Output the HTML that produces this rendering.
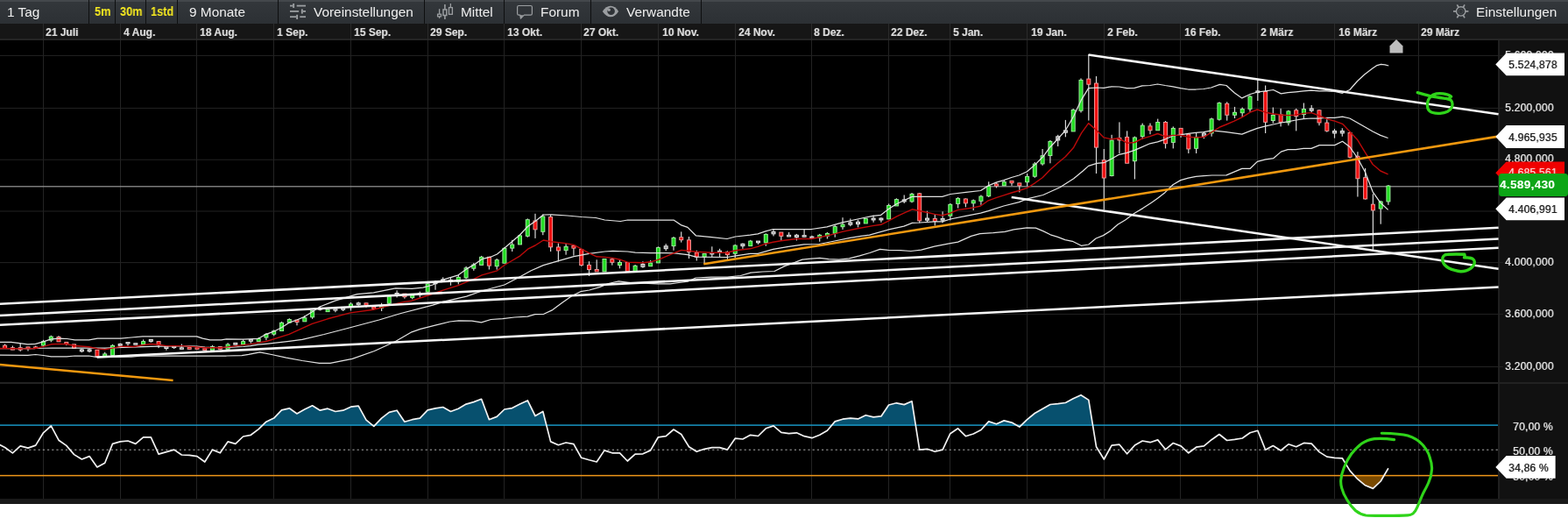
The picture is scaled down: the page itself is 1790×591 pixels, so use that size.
<!DOCTYPE html>
<html lang="de"><head><meta charset="utf-8"><title>Chart</title>
<style>
html,body{margin:0;padding:0;background:#fff;}
body{width:1790px;height:591px;overflow:hidden;position:relative;font-family:"Liberation Sans",Arial,sans-serif;}
#app{position:absolute;left:0;top:0;width:1790px;height:575px;background:#000;}
#tb{position:absolute;left:0;top:0;width:1790px;height:27px;background:linear-gradient(#33373b,#2c3034);border-top:2px solid #44484c;box-sizing:border-box;}
.sep{position:absolute;top:0;width:1px;height:27px;background:#0e0f10;}
.tl,.ty,.dl,.al,.tag{will-change:transform;}
.tl{position:absolute;top:1.5px;height:25px;line-height:24px;font-size:15.4px;color:#eeeeee;white-space:nowrap;}
.ty{position:absolute;top:1px;height:25px;line-height:24px;font-size:14.2px;font-weight:bold;color:#f7ea20;white-space:nowrap;transform:scaleX(0.9);transform-origin:0 50%;}
#dates{position:absolute;left:0;top:27px;width:1790px;height:19px;background:#161616;border-bottom:2px solid #252525;box-sizing:border-box;}
.dl{position:absolute;top:0;height:19px;line-height:20px;font-size:12px;font-weight:bold;color:#dcdcdc;white-space:nowrap;text-shadow:0.8px 0 0.6px rgba(220,220,220,0.4);}
.dg{position:absolute;top:0;width:1px;height:19px;background:#2b2b2b;}
#axis{position:absolute;left:1709.5px;top:46px;width:80.5px;height:529px;background:#111;border-left:2px solid #1f1f1f;box-sizing:border-box;}
#foot{position:absolute;left:0;top:569px;width:1790px;height:6px;background:#191919;}
.al{position:absolute;font-size:12px;color:#e6e6e6;white-space:nowrap;height:15px;line-height:15px;letter-spacing:0.24px;text-shadow:0.8px 0 0.4px rgba(230,230,230,0.65);margin-top:0.7px;}
.tag{position:absolute;font-size:12px;color:#1c1c1c;white-space:nowrap;height:25px;line-height:25px;letter-spacing:0.24px;text-shadow:0.8px 0 0.4px rgba(28,28,28,0.6);margin-top:2px;}
svg{position:absolute;left:0;top:0;overflow:visible;}
</style></head><body>
<div id="app">
<div id="tb">
<div class="sep" style="left:101px;top:-2px"></div>
<div class="sep" style="left:131px;top:-2px"></div>
<div class="sep" style="left:166px;top:-2px"></div>
<div class="sep" style="left:202px;top:-2px"></div>
<div class="sep" style="left:317px;top:-2px"></div>
<div class="sep" style="left:484px;top:-2px"></div>
<div class="sep" style="left:575px;top:-2px"></div>
<div class="sep" style="left:674px;top:-2px"></div>
<div class="sep" style="left:800px;top:-2px"></div>
</div>
<div class="tl" style="left:8px">1 Tag</div>
<div class="ty" style="left:107.6px">5m</div>
<div class="ty" style="left:136.6px">30m</div>
<div class="ty" style="left:171.6px">1std</div>
<div class="tl" style="left:216px">9 Monate</div>
<div class="tl" style="left:358px">Voreinstellungen</div>
<div class="tl" style="left:526px">Mittel</div>
<div class="tl" style="left:617px">Forum</div>
<div class="tl" style="left:715px">Verwandte</div>
<div class="tl" style="left:1685px">Einstellungen</div>
<div id="dates">
<div class="dg" style="left:49px"></div><div class="dl" style="left:52.0px">21 Juli</div>
<div class="dg" style="left:137px"></div><div class="dl" style="left:141.0px">4 Aug.</div>
<div class="dg" style="left:224px"></div><div class="dl" style="left:228.3px">18 Aug.</div>
<div class="dg" style="left:312px"></div><div class="dl" style="left:316.3px">1 Sep.</div>
<div class="dg" style="left:400px"></div><div class="dl" style="left:404.3px">15 Sep.</div>
<div class="dg" style="left:488px"></div><div class="dl" style="left:491.0px">29 Sep.</div>
<div class="dg" style="left:575px"></div><div class="dl" style="left:579.1px">13 Okt.</div>
<div class="dg" style="left:663px"></div><div class="dl" style="left:666.0px">27 Okt.</div>
<div class="dg" style="left:751px"></div><div class="dl" style="left:756.3px">10 Nov.</div>
<div class="dg" style="left:839px"></div><div class="dl" style="left:842.6px">24 Nov.</div>
<div class="dg" style="left:926px"></div><div class="dl" style="left:929.0px">8 Dez.</div>
<div class="dg" style="left:1014px"></div><div class="dl" style="left:1017.0px">22 Dez.</div>
<div class="dg" style="left:1084px"></div><div class="dl" style="left:1087.6px">5 Jan.</div>
<div class="dg" style="left:1172px"></div><div class="dl" style="left:1177.3px">19 Jan.</div>
<div class="dg" style="left:1260px"></div><div class="dl" style="left:1264.0px">2 Feb.</div>
<div class="dg" style="left:1347px"></div><div class="dl" style="left:1352.3px">16 Feb.</div>
<div class="dg" style="left:1435px"></div><div class="dl" style="left:1439.0px">2 März</div>
<div class="dg" style="left:1523px"></div><div class="dl" style="left:1528.3px">16 März</div>
<div class="dg" style="left:1619px"></div><div class="dl" style="left:1622.0px">29 März</div>
</div>
<div id="axis"></div>
<div id="foot"></div>
</div>
<svg id="chart" width="1790" height="591" viewBox="0 0 1790 591">
<g id="grid"><rect x="49" y="46" width="1" height="523" fill="#232323"/><rect x="137" y="46" width="1" height="523" fill="#232323"/><rect x="224" y="46" width="1" height="523" fill="#232323"/><rect x="312" y="46" width="1" height="523" fill="#232323"/><rect x="400" y="46" width="1" height="523" fill="#232323"/><rect x="488" y="46" width="1" height="523" fill="#232323"/><rect x="575" y="46" width="1" height="523" fill="#232323"/><rect x="663" y="46" width="1" height="523" fill="#232323"/><rect x="751" y="46" width="1" height="523" fill="#232323"/><rect x="839" y="46" width="1" height="523" fill="#232323"/><rect x="926" y="46" width="1" height="523" fill="#232323"/><rect x="1014" y="46" width="1" height="523" fill="#232323"/><rect x="1084" y="46" width="1" height="523" fill="#232323"/><rect x="1172" y="46" width="1" height="523" fill="#232323"/><rect x="1260" y="46" width="1" height="523" fill="#232323"/><rect x="1347" y="46" width="1" height="523" fill="#232323"/><rect x="1435" y="46" width="1" height="523" fill="#232323"/><rect x="1523" y="46" width="1" height="523" fill="#232323"/><rect x="1619" y="46" width="1" height="523" fill="#232323"/><rect x="0" y="62.9" width="1716" height="1" fill="#232323"/><rect x="0" y="122.9" width="1716" height="1" fill="#232323"/><rect x="0" y="181.7" width="1716" height="1" fill="#232323"/><rect x="0" y="240.5" width="1716" height="1" fill="#232323"/><rect x="0" y="299.1" width="1716" height="1" fill="#232323"/><rect x="0" y="357.9" width="1716" height="1" fill="#232323"/><rect x="0" y="418.0" width="1716" height="1" fill="#232323"/><rect x="0" y="436" width="1790" height="2" fill="#222"/></g>
<rect x="0" y="212.2" width="1710" height="1.2" fill="#9a9a9a"/>
<g id="rsi"><polygon fill="#07506e" points="299.9,485.1 303.9,481.2 312.7,477.1 321.5,467.8 330.3,465.8 339,472 347.8,467 356.6,462.8 365.4,468.2 374.1,466.2 382.9,469.5 391.7,468.2 400.5,464.2 409.2,463.1 418,479.2 425.3,485.1"/><polygon fill="#07506e" points="427.9,485.1 435.6,477.1 444.3,470.4 453.1,468.2 461.9,481.2 470.7,478.7 479.4,477.1 488.2,467.8 497,465.8 505.7,464.5 514.5,469.5 523.3,466.2 532.1,461.1 540.8,458.6 549.6,455.3 558.4,478.7 567.2,475.4 575.9,467 584.7,465.6 593.5,461.1 602.3,456.9 611,474.5 619.8,469.5 623.8,485.1"/><polygon fill="#07506e" points="949.7,485.1 953.2,480.9 962,478.2 970.8,477.1 979.5,477.9 988.3,473.7 997.1,475.9 1005.9,474.9 1014.6,462 1023.4,459.8 1032.2,461.6 1041,457.8 1045.3,485.1"/><polygon fill="#07506e" points="1124.9,485.1 1128.7,480.9 1137.5,483.8 1146.2,479.9 1155,482.1 1160.3,485.1"/><polygon fill="#07506e" points="1165.9,485.1 1172.6,478.7 1181.3,471.5 1190.1,466.5 1198.9,461.5 1207.7,460.6 1216.4,459.5 1225.2,454.8 1234,450.7 1242.8,456.4 1247.5,485.1"/><polygon fill="#7a4a00" points="1546.1,542.6 1549.9,546.7 1558.6,553.8 1567.4,557.4 1576.2,549 1580,542.6"/><rect x="0" y="484.40000000000003" width="1710" height="1.4" fill="#1a9fd0"/><line x1="2" y1="513.2" x2="1711" y2="513.2" stroke="#b0b0b0" stroke-width="1" stroke-dasharray="2.2,3"/><rect x="0" y="541.85" width="1710" height="1.5" fill="#ee961a"/><polyline fill="none" stroke="#f2f2f2" stroke-width="1.7" stroke-linejoin="round" points="-3.1,506 5.6,510.5 14.4,516.9 23.2,508.9 32,511.1 40.7,508.1 49.5,493.8 58.3,485.9 67,502.2 75.8,508.4 84.6,518.6 93.4,524 102.1,520.6 110.9,532.9 119.7,528.2 128.5,506.4 137.2,503.9 146,503 154.8,506.4 163.6,498.8 172.3,498.8 181.1,518.1 189.9,515.6 198.7,513.1 207.4,519 216.2,519.3 225,520.6 233.8,527 242.5,513.1 251.3,516.8 260.1,503.9 268.8,506.4 277.6,498 286.4,496.3 295.2,489.6 303.9,481.2 312.7,477.1 321.5,467.8 330.3,465.8 339,472 347.8,467 356.6,462.8 365.4,468.2 374.1,466.2 382.9,469.5 391.7,468.2 400.5,464.2 409.2,463.1 418,479.2 426.8,486.3 435.6,477.1 444.3,470.4 453.1,468.2 461.9,481.2 470.7,478.7 479.4,477.1 488.2,467.8 497,465.8 505.7,464.5 514.5,469.5 523.3,466.2 532.1,461.1 540.8,458.6 549.6,455.3 558.4,478.7 567.2,475.4 575.9,467 584.7,465.6 593.5,461.1 602.3,456.9 611,474.5 619.8,469.5 628.6,503.9 637.4,507.7 646.1,505 654.9,506.7 663.7,522.3 672.5,524.8 681.2,527 690,513.9 698.8,516.8 707.5,516.9 716.3,526 725.1,518.1 733.9,517.8 742.6,513.9 751.4,498.8 760.2,497.7 769,490 777.7,495.5 786.5,509.7 795.3,515.3 804.1,512.3 812.8,510.6 821.6,510.6 830.4,513.1 839.2,500.2 847.9,501 856.7,496.3 865.5,497.5 874.3,488.8 883,485.9 891.8,493.3 900.6,494.7 909.4,493.8 918.1,497.7 926.9,499.7 935.7,496.3 944.4,491.3 953.2,480.9 962,478.2 970.8,477.1 979.5,477.9 988.3,473.7 997.1,475.9 1005.9,474.9 1014.6,462 1023.4,459.8 1032.2,461.6 1041,457.8 1049.7,513.1 1058.5,512.3 1067.3,515.3 1076.1,513.1 1084.8,494.7 1093.6,488.8 1102.4,497.7 1111.2,495 1119.9,490.5 1128.7,480.9 1137.5,483.8 1146.2,479.9 1155,482.1 1163.8,487.1 1172.6,478.7 1181.3,471.5 1190.1,466.5 1198.9,461.5 1207.7,460.6 1216.4,459.5 1225.2,454.8 1234,450.7 1242.8,456.4 1251.5,509.7 1260.3,524 1269.1,508.1 1277.9,507.2 1286.6,517.8 1295.4,508.1 1304.2,503 1313,504.7 1321.7,501.9 1330.5,512.8 1339.3,505.5 1348.1,508.9 1356.8,516.8 1365.6,510.2 1374.4,508.9 1383.1,501.7 1391.9,495.5 1400.7,502.5 1409.5,501.4 1418.2,500 1427,493.8 1435.8,491.3 1444.6,513.2 1453.3,508.5 1462.1,514 1470.9,506.8 1479.7,509.7 1488.4,505.4 1497.2,506.1 1506,515.6 1514.8,521.1 1523.5,522.3 1532.3,522.8 1541.1,537.1 1549.9,546.7 1558.6,553.8 1567.4,557.4 1576.2,549 1584.9,534.2"/></g>
<g id="candles"><rect x="5" y="392.4" width="1.2" height="5.1" fill="#d8d8d8"/><rect x="3.1" y="393.7" width="5" height="4.2" fill="#f0a0a0"/><rect x="4" y="394.6" width="3.2" height="2.4" fill="#f01212"/><rect x="13.8" y="394.5" width="1.2" height="4.7" fill="#d8d8d8"/><rect x="11.9" y="396.2" width="5" height="3.4" fill="#f0a0a0"/><rect x="12.8" y="397.1" width="3.2" height="1.6" fill="#f01212"/><rect x="22.6" y="391.6" width="1.2" height="9.3" fill="#d8d8d8"/><rect x="20.7" y="396.2" width="5" height="3.4" fill="#f0a0a0"/><rect x="21.6" y="397.1" width="3.2" height="1.6" fill="#f01212"/><rect x="31.4" y="395.8" width="1.2" height="4.7" fill="#d8d8d8"/><rect x="29.5" y="395.4" width="5" height="2.9" fill="#f0a0a0"/><rect x="30.4" y="396.3" width="3.2" height="1.1" fill="#f01212"/><rect x="40.1" y="394.5" width="1.2" height="3" fill="#d8d8d8"/><rect x="38.2" y="395.4" width="5" height="2.5" fill="#f0a0a0"/><rect x="39.1" y="396" width="3.2" height="1.3" fill="#f01212" opacity="0.85"/><rect x="48.9" y="387.8" width="1.2" height="7.6" fill="#d8d8d8"/><rect x="47" y="389.1" width="5" height="5.4" fill="#a4eea4"/><rect x="47.9" y="390" width="3.2" height="3.6" fill="#22dc22"/><rect x="57.7" y="382.7" width="1.2" height="7.6" fill="#d8d8d8"/><rect x="55.8" y="383.6" width="5" height="5" fill="#a4eea4"/><rect x="56.7" y="384.5" width="3.2" height="3.2" fill="#22dc22"/><rect x="66.4" y="383.1" width="1.2" height="6.8" fill="#d8d8d8"/><rect x="64.5" y="384" width="5" height="6.3" fill="#f0a0a0"/><rect x="65.4" y="384.9" width="3.2" height="4.5" fill="#f01212"/><rect x="75.2" y="390.3" width="1.2" height="3.8" fill="#d8d8d8"/><rect x="73.3" y="389.9" width="5" height="2.9" fill="#f0a0a0"/><rect x="74.2" y="390.8" width="3.2" height="1.1" fill="#f01212"/><rect x="84" y="392.8" width="1.2" height="4.7" fill="#d8d8d8"/><rect x="82.1" y="392.4" width="5" height="5.5" fill="#f0a0a0"/><rect x="83" y="393.3" width="3.2" height="3.7" fill="#f01212"/><rect x="92.8" y="397.9" width="1.2" height="4.2" fill="#d8d8d8"/><rect x="90.9" y="398.4" width="5" height="2.9" fill="#ededed"/><rect x="91.8" y="399.3" width="3.2" height="1.1" fill="#9a9a9a"/><rect x="101.5" y="397.9" width="1.2" height="4.2" fill="#d8d8d8"/><rect x="99.6" y="398.4" width="5" height="2.9" fill="#ededed"/><rect x="100.5" y="399.3" width="3.2" height="1.1" fill="#9a9a9a"/><rect x="110.3" y="399.2" width="1.2" height="7.8" fill="#d8d8d8"/><rect x="108.4" y="398.8" width="5" height="8.2" fill="#f0a0a0"/><rect x="109.3" y="399.7" width="3.2" height="6.4" fill="#f01212"/><rect x="119.1" y="401.7" width="1.2" height="4.7" fill="#d8d8d8"/><rect x="117.2" y="403.4" width="5" height="3.4" fill="#a4eea4"/><rect x="118.1" y="404.3" width="3.2" height="1.6" fill="#22dc22"/><rect x="127.9" y="392.8" width="1.2" height="13.5" fill="#d8d8d8"/><rect x="126" y="393.8" width="5" height="12.1" fill="#a4eea4"/><rect x="126.9" y="394.7" width="3.2" height="10.3" fill="#22dc22"/><rect x="136.6" y="391.6" width="1.2" height="3.8" fill="#d8d8d8"/><rect x="134.7" y="392" width="5" height="2.9" fill="#ededed"/><rect x="135.6" y="392.9" width="3.2" height="1.1" fill="#9a9a9a"/><rect x="145.4" y="390.4" width="1.2" height="4.2" fill="#d8d8d8"/><rect x="143.5" y="390" width="5" height="2.5" fill="#ededed"/><rect x="144.4" y="390.6" width="3.2" height="1.3" fill="#9a9a9a" opacity="0.85"/><rect x="154.2" y="391.6" width="1.2" height="1.7" fill="#d8d8d8"/><rect x="152.3" y="391.2" width="5" height="2.5" fill="#ededed"/><rect x="153.2" y="391.8" width="3.2" height="1.3" fill="#9a9a9a" opacity="0.85"/><rect x="163" y="387.4" width="1.2" height="5.5" fill="#d8d8d8"/><rect x="161.1" y="389.1" width="5" height="4.2" fill="#a4eea4"/><rect x="162" y="390" width="3.2" height="2.4" fill="#22dc22"/><rect x="171.7" y="387.4" width="1.2" height="3.4" fill="#d8d8d8"/><rect x="169.8" y="387" width="5" height="2.9" fill="#ededed"/><rect x="170.7" y="387.9" width="3.2" height="1.1" fill="#9a9a9a"/><rect x="180.5" y="389.5" width="1.2" height="7.6" fill="#d8d8d8"/><rect x="178.6" y="389.1" width="5" height="5.1" fill="#f0a0a0"/><rect x="179.5" y="390" width="3.2" height="3.3" fill="#f01212"/><rect x="189.3" y="395.5" width="1.2" height="4.2" fill="#d8d8d8"/><rect x="187.4" y="395.1" width="5" height="2.9" fill="#ededed"/><rect x="188.3" y="396" width="3.2" height="1.1" fill="#9a9a9a"/><rect x="198.1" y="395" width="1.2" height="3" fill="#d8d8d8"/><rect x="196.2" y="394.6" width="5" height="2.5" fill="#ededed"/><rect x="197.1" y="395.2" width="3.2" height="1.3" fill="#9a9a9a" opacity="0.85"/><rect x="206.8" y="392.5" width="1.2" height="5.9" fill="#d8d8d8"/><rect x="204.9" y="396.3" width="5" height="2.5" fill="#ededed"/><rect x="205.8" y="396.9" width="3.2" height="1.3" fill="#9a9a9a" opacity="0.85"/><rect x="215.6" y="396.3" width="1.2" height="2.1" fill="#d8d8d8"/><rect x="213.7" y="395.9" width="5" height="2.9" fill="#f0a0a0"/><rect x="214.6" y="396.8" width="3.2" height="1.1" fill="#f01212"/><rect x="224.4" y="396.7" width="1.2" height="1.7" fill="#d8d8d8"/><rect x="222.5" y="396.3" width="5" height="2.5" fill="#f0a0a0"/><rect x="223.4" y="396.9" width="3.2" height="1.3" fill="#f01212" opacity="0.85"/><rect x="233.2" y="397.6" width="1.2" height="2.1" fill="#d8d8d8"/><rect x="231.3" y="397.2" width="5" height="2.9" fill="#f0a0a0"/><rect x="232.2" y="398.1" width="3.2" height="1.1" fill="#f01212"/><rect x="241.9" y="393.8" width="1.2" height="5.9" fill="#d8d8d8"/><rect x="240" y="395.1" width="5" height="5" fill="#a4eea4"/><rect x="240.9" y="396" width="3.2" height="3.2" fill="#22dc22"/><rect x="250.7" y="395.5" width="1.2" height="2.9" fill="#d8d8d8"/><rect x="248.8" y="395.1" width="5" height="3.7" fill="#f0a0a0"/><rect x="249.7" y="396" width="3.2" height="1.9" fill="#f01212"/><rect x="259.5" y="391.2" width="1.2" height="7.2" fill="#d8d8d8"/><rect x="257.6" y="392.5" width="5" height="6.3" fill="#a4eea4"/><rect x="258.5" y="393.4" width="3.2" height="4.5" fill="#22dc22"/><rect x="268.2" y="391.2" width="1.2" height="2.1" fill="#d8d8d8"/><rect x="266.3" y="390.8" width="5" height="2.9" fill="#ededed"/><rect x="267.2" y="391.7" width="3.2" height="1.1" fill="#9a9a9a"/><rect x="277" y="387.4" width="1.2" height="5.6" fill="#d8d8d8"/><rect x="275.1" y="389.1" width="5" height="4.3" fill="#a4eea4"/><rect x="276" y="390" width="3.2" height="2.5" fill="#22dc22"/><rect x="285.8" y="387.4" width="1.2" height="4.2" fill="#d8d8d8"/><rect x="283.9" y="387.1" width="5" height="2.6" fill="#ededed"/><rect x="284.8" y="387.7" width="3.2" height="1.4" fill="#9a9a9a" opacity="0.85"/><rect x="294.6" y="385" width="1.2" height="4.5" fill="#d8d8d8"/><rect x="292.7" y="385.9" width="5" height="4" fill="#a4eea4"/><rect x="293.6" y="386.8" width="3.2" height="2.2" fill="#22dc22"/><rect x="303.3" y="380" width="1.2" height="8.2" fill="#d8d8d8"/><rect x="301.4" y="380.9" width="5" height="4.6" fill="#a4eea4"/><rect x="302.3" y="381.8" width="3.2" height="2.8" fill="#22dc22"/><rect x="312.1" y="376.3" width="1.2" height="6.9" fill="#d8d8d8"/><rect x="310.2" y="377.2" width="5" height="4.5" fill="#a4eea4"/><rect x="311.1" y="378.1" width="3.2" height="2.7" fill="#22dc22"/><rect x="320.9" y="366.9" width="1.2" height="10.7" fill="#d8d8d8"/><rect x="319" y="367.8" width="5" height="10.2" fill="#a4eea4"/><rect x="319.9" y="368.7" width="3.2" height="8.4" fill="#22dc22"/><rect x="329.7" y="363.2" width="1.2" height="5" fill="#d8d8d8"/><rect x="327.8" y="364" width="5" height="4.6" fill="#a4eea4"/><rect x="328.7" y="364.9" width="3.2" height="2.8" fill="#22dc22"/><rect x="338.4" y="365" width="1.2" height="6.3" fill="#d8d8d8"/><rect x="336.5" y="364.6" width="5" height="3.4" fill="#f0a0a0"/><rect x="337.4" y="365.5" width="3.2" height="1.6" fill="#f01212"/><rect x="347.2" y="360" width="1.2" height="6.9" fill="#d8d8d8"/><rect x="345.3" y="362.2" width="5" height="5.1" fill="#a4eea4"/><rect x="346.2" y="363.1" width="3.2" height="3.3" fill="#22dc22"/><rect x="356" y="353.8" width="1.2" height="10" fill="#d8d8d8"/><rect x="354.1" y="354" width="5" height="8.3" fill="#a4eea4"/><rect x="355" y="354.9" width="3.2" height="6.5" fill="#22dc22"/><rect x="364.8" y="349.4" width="1.2" height="5" fill="#d8d8d8"/><rect x="362.9" y="350.9" width="5" height="2.7" fill="#ededed"/><rect x="363.8" y="351.8" width="3.2" height="0.9" fill="#9a9a9a"/><rect x="373.5" y="353.2" width="1.2" height="2.5" fill="#d8d8d8"/><rect x="371.6" y="352.8" width="5" height="3.3" fill="#a4eea4"/><rect x="372.5" y="353.7" width="3.2" height="1.5" fill="#22dc22"/><rect x="382.3" y="352.8" width="1.2" height="3.5" fill="#d8d8d8"/><rect x="380.4" y="352.3" width="5" height="2.2" fill="#ededed"/><rect x="381.3" y="352.9" width="3.2" height="1" fill="#9a9a9a" opacity="0.85"/><rect x="391.1" y="352" width="1.2" height="3" fill="#d8d8d8"/><rect x="389.2" y="351.5" width="5" height="2.2" fill="#ededed"/><rect x="390.1" y="352.1" width="3.2" height="1" fill="#9a9a9a" opacity="0.85"/><rect x="399.9" y="345" width="1.2" height="9.4" fill="#d8d8d8"/><rect x="398" y="346.5" width="5" height="3.9" fill="#a4eea4"/><rect x="398.9" y="347.4" width="3.2" height="2.1" fill="#22dc22"/><rect x="408.6" y="344.4" width="1.2" height="4.4" fill="#d8d8d8"/><rect x="406.7" y="345.3" width="5" height="2.6" fill="#ededed"/><rect x="407.6" y="345.9" width="3.2" height="1.4" fill="#9a9a9a" opacity="0.85"/><rect x="417.4" y="345.7" width="1.2" height="5" fill="#d8d8d8"/><rect x="415.5" y="345.3" width="5" height="3.3" fill="#f0a0a0"/><rect x="416.4" y="346.2" width="3.2" height="1.5" fill="#f01212"/><rect x="426.2" y="350" width="1.2" height="2.5" fill="#d8d8d8"/><rect x="424.3" y="349.6" width="5" height="3.3" fill="#f0a0a0"/><rect x="425.2" y="350.5" width="3.2" height="1.5" fill="#f01212"/><rect x="435" y="345.7" width="1.2" height="9.3" fill="#d8d8d8"/><rect x="433.1" y="349" width="5" height="2.7" fill="#a4eea4"/><rect x="434" y="349.9" width="3.2" height="0.9" fill="#22dc22"/><rect x="443.7" y="337.5" width="1.2" height="10" fill="#d8d8d8"/><rect x="441.8" y="337.7" width="5" height="9" fill="#a4eea4"/><rect x="442.7" y="338.6" width="3.2" height="7.2" fill="#22dc22"/><rect x="452.5" y="331.3" width="1.2" height="8.1" fill="#d8d8d8"/><rect x="450.6" y="334" width="5" height="3.9" fill="#ededed"/><rect x="451.5" y="334.9" width="3.2" height="2.1" fill="#9a9a9a"/><rect x="461.3" y="335" width="1.2" height="5.7" fill="#d8d8d8"/><rect x="459.4" y="334.6" width="5" height="4.6" fill="#f0a0a0"/><rect x="460.3" y="335.5" width="3.2" height="2.8" fill="#f01212"/><rect x="470.1" y="336.9" width="1.2" height="4.4" fill="#d8d8d8"/><rect x="468.2" y="336.5" width="5" height="3.6" fill="#a4eea4"/><rect x="469.1" y="337.4" width="3.2" height="1.8" fill="#22dc22"/><rect x="478.8" y="332.6" width="1.2" height="6.9" fill="#d8d8d8"/><rect x="476.9" y="334.1" width="5" height="2.6" fill="#ededed"/><rect x="477.8" y="334.7" width="3.2" height="1.4" fill="#9a9a9a" opacity="0.85"/><rect x="487.6" y="322.6" width="1.2" height="11.2" fill="#d8d8d8"/><rect x="485.7" y="323.4" width="5" height="10.2" fill="#a4eea4"/><rect x="486.6" y="324.3" width="3.2" height="8.4" fill="#22dc22"/><rect x="496.4" y="320" width="1.2" height="10.7" fill="#d8d8d8"/><rect x="494.5" y="321.5" width="5" height="2.7" fill="#ededed"/><rect x="495.4" y="322.4" width="3.2" height="0.9" fill="#9a9a9a"/><rect x="505.1" y="316.3" width="1.2" height="5" fill="#d8d8d8"/><rect x="503.2" y="318.4" width="5" height="2.7" fill="#ededed"/><rect x="504.1" y="319.3" width="3.2" height="0.9" fill="#9a9a9a"/><rect x="513.9" y="316.3" width="1.2" height="9.4" fill="#d8d8d8"/><rect x="512" y="319" width="5" height="2.7" fill="#ededed"/><rect x="512.9" y="319.9" width="3.2" height="0.9" fill="#9a9a9a"/><rect x="522.7" y="313.8" width="1.2" height="10.6" fill="#d8d8d8"/><rect x="520.8" y="315.9" width="5" height="5.8" fill="#a4eea4"/><rect x="521.7" y="316.8" width="3.2" height="4" fill="#22dc22"/><rect x="531.5" y="303.8" width="1.2" height="14.4" fill="#d8d8d8"/><rect x="529.6" y="305.3" width="5" height="12" fill="#a4eea4"/><rect x="530.5" y="306.2" width="3.2" height="10.2" fill="#22dc22"/><rect x="540.2" y="300" width="1.2" height="8.8" fill="#d8d8d8"/><rect x="538.3" y="301.5" width="5" height="5.2" fill="#a4eea4"/><rect x="539.2" y="302.4" width="3.2" height="3.4" fill="#22dc22"/><rect x="549" y="291.9" width="1.2" height="10.6" fill="#d8d8d8"/><rect x="547.1" y="292.8" width="5" height="10.1" fill="#a4eea4"/><rect x="548" y="293.7" width="3.2" height="8.3" fill="#22dc22"/><rect x="557.8" y="293.2" width="1.2" height="14.3" fill="#d8d8d8"/><rect x="555.9" y="292.8" width="5" height="10.8" fill="#f0a0a0"/><rect x="556.8" y="293.7" width="3.2" height="9" fill="#f01212"/><rect x="566.6" y="295" width="1.2" height="12.6" fill="#d8d8d8"/><rect x="564.7" y="296.2" width="5" height="8" fill="#a4eea4"/><rect x="565.6" y="297.1" width="3.2" height="6.2" fill="#22dc22"/><rect x="575.3" y="282" width="1.2" height="18.3" fill="#d8d8d8"/><rect x="573.4" y="282.8" width="5" height="17.9" fill="#a4eea4"/><rect x="574.3" y="283.7" width="3.2" height="16.1" fill="#22dc22"/><rect x="584.1" y="273.8" width="1.2" height="13.2" fill="#d8d8d8"/><rect x="582.2" y="278.6" width="5" height="5" fill="#a4eea4"/><rect x="583.1" y="279.5" width="3.2" height="3.2" fill="#22dc22"/><rect x="592.9" y="267.5" width="1.2" height="11.5" fill="#d8d8d8"/><rect x="591" y="268.4" width="5" height="11" fill="#a4eea4"/><rect x="591.9" y="269.3" width="3.2" height="9.2" fill="#22dc22"/><rect x="601.7" y="249.4" width="1.2" height="21.3" fill="#d8d8d8"/><rect x="599.8" y="250.2" width="5" height="19.6" fill="#a4eea4"/><rect x="600.7" y="251.1" width="3.2" height="17.8" fill="#22dc22"/><rect x="610.4" y="243.8" width="1.2" height="28.1" fill="#d8d8d8"/><rect x="608.5" y="251.5" width="5" height="10.8" fill="#f0a0a0"/><rect x="609.4" y="252.4" width="3.2" height="9" fill="#f01212"/><rect x="619.2" y="244.4" width="1.2" height="23.8" fill="#d8d8d8"/><rect x="617.3" y="246.5" width="5" height="18.3" fill="#a4eea4"/><rect x="618.2" y="247.4" width="3.2" height="16.5" fill="#22dc22"/><rect x="628" y="245" width="1.2" height="42" fill="#d8d8d8"/><rect x="626.1" y="247.1" width="5" height="35.2" fill="#f0a0a0"/><rect x="627" y="248" width="3.2" height="33.4" fill="#f01212"/><rect x="636.8" y="277.5" width="1.2" height="21" fill="#d8d8d8"/><rect x="634.9" y="281.5" width="5" height="4.9" fill="#f0a0a0"/><rect x="635.8" y="282.4" width="3.2" height="3.1" fill="#f01212"/><rect x="645.5" y="278.2" width="1.2" height="12.5" fill="#d8d8d8"/><rect x="643.6" y="280.9" width="5" height="5.2" fill="#a4eea4"/><rect x="644.5" y="281.8" width="3.2" height="3.4" fill="#22dc22"/><rect x="654.3" y="279.4" width="1.2" height="12.2" fill="#d8d8d8"/><rect x="652.4" y="279.9" width="5" height="3.7" fill="#f0a0a0"/><rect x="653.3" y="280.8" width="3.2" height="1.9" fill="#f01212"/><rect x="663.1" y="283.8" width="1.2" height="20" fill="#d8d8d8"/><rect x="661.2" y="284" width="5" height="19" fill="#f0a0a0"/><rect x="662.1" y="284.9" width="3.2" height="17.2" fill="#f01212"/><rect x="671.9" y="298.2" width="1.2" height="16.8" fill="#d8d8d8"/><rect x="670" y="301.9" width="5" height="6.1" fill="#f0a0a0"/><rect x="670.9" y="302.8" width="3.2" height="4.3" fill="#f01212"/><rect x="680.6" y="296.3" width="1.2" height="13.7" fill="#d8d8d8"/><rect x="678.7" y="307" width="5" height="3.4" fill="#f0a0a0"/><rect x="679.6" y="307.9" width="3.2" height="1.6" fill="#f01212"/><rect x="689.4" y="295" width="1.2" height="15" fill="#d8d8d8"/><rect x="687.5" y="295" width="5" height="15.4" fill="#a4eea4"/><rect x="688.4" y="295.9" width="3.2" height="13.6" fill="#22dc22"/><rect x="698.2" y="294.4" width="1.2" height="8.2" fill="#d8d8d8"/><rect x="696.3" y="295.3" width="5" height="4.5" fill="#f0a0a0"/><rect x="697.2" y="296.2" width="3.2" height="2.7" fill="#f01212"/><rect x="706.9" y="296.3" width="1.2" height="10" fill="#d8d8d8"/><rect x="705" y="299" width="5" height="4" fill="#a4eea4"/><rect x="705.9" y="299.9" width="3.2" height="2.2" fill="#22dc22"/><rect x="715.7" y="299.4" width="1.2" height="10.6" fill="#d8d8d8"/><rect x="713.8" y="299" width="5" height="11.4" fill="#f0a0a0"/><rect x="714.7" y="299.9" width="3.2" height="9.6" fill="#f01212"/><rect x="724.5" y="302" width="1.2" height="9" fill="#d8d8d8"/><rect x="722.6" y="302.8" width="5" height="7.6" fill="#a4eea4"/><rect x="723.5" y="303.7" width="3.2" height="5.8" fill="#22dc22"/><rect x="733.3" y="298.2" width="1.2" height="7.5" fill="#d8d8d8"/><rect x="731.4" y="300.9" width="5" height="3.9" fill="#ededed"/><rect x="732.3" y="301.8" width="3.2" height="2.1" fill="#9a9a9a"/><rect x="742" y="297" width="1.2" height="6.8" fill="#d8d8d8"/><rect x="740.1" y="299.6" width="5" height="4.6" fill="#a4eea4"/><rect x="741" y="300.5" width="3.2" height="2.8" fill="#22dc22"/><rect x="750.8" y="281.3" width="1.2" height="18.7" fill="#d8d8d8"/><rect x="748.9" y="282.1" width="5" height="18.3" fill="#a4eea4"/><rect x="749.8" y="283" width="3.2" height="16.5" fill="#22dc22"/><rect x="759.6" y="278.2" width="1.2" height="8.1" fill="#d8d8d8"/><rect x="757.7" y="280.3" width="5" height="3.9" fill="#ededed"/><rect x="758.6" y="281.2" width="3.2" height="2.1" fill="#9a9a9a"/><rect x="768.4" y="270" width="1.2" height="15.7" fill="#d8d8d8"/><rect x="766.5" y="270.9" width="5" height="10.2" fill="#a4eea4"/><rect x="767.4" y="271.8" width="3.2" height="8.4" fill="#22dc22"/><rect x="777.1" y="264.4" width="1.2" height="12.2" fill="#d8d8d8"/><rect x="775.2" y="270.3" width="5" height="3.9" fill="#f0a0a0"/><rect x="776.1" y="271.2" width="3.2" height="2.1" fill="#f01212"/><rect x="785.9" y="270" width="1.2" height="25" fill="#d8d8d8"/><rect x="784" y="273.4" width="5" height="14.5" fill="#f0a0a0"/><rect x="784.9" y="274.3" width="3.2" height="12.7" fill="#f01212"/><rect x="794.7" y="285.7" width="1.2" height="11.8" fill="#d8d8d8"/><rect x="792.8" y="287.8" width="5" height="5.8" fill="#f0a0a0"/><rect x="793.7" y="288.7" width="3.2" height="4" fill="#f01212"/><rect x="803.5" y="289.4" width="1.2" height="11.9" fill="#d8d8d8"/><rect x="801.6" y="289" width="5" height="4.6" fill="#a4eea4"/><rect x="802.5" y="289.9" width="3.2" height="2.8" fill="#22dc22"/><rect x="812.2" y="281.3" width="1.2" height="11.9" fill="#d8d8d8"/><rect x="810.3" y="288.1" width="5" height="2.3" fill="#ededed"/><rect x="811.2" y="288.7" width="3.2" height="1.1" fill="#9a9a9a" opacity="0.85"/><rect x="821" y="283.8" width="1.2" height="9.4" fill="#d8d8d8"/><rect x="819.1" y="285.8" width="5" height="2.2" fill="#ededed"/><rect x="820" y="286.4" width="3.2" height="1" fill="#9a9a9a" opacity="0.85"/><rect x="829.8" y="286.3" width="1.2" height="10" fill="#d8d8d8"/><rect x="827.9" y="287.1" width="5" height="4" fill="#f0a0a0"/><rect x="828.8" y="288" width="3.2" height="2.2" fill="#f01212"/><rect x="838.6" y="278.8" width="1.2" height="15.6" fill="#d8d8d8"/><rect x="836.7" y="279.6" width="5" height="10.2" fill="#a4eea4"/><rect x="837.6" y="280.5" width="3.2" height="8.4" fill="#22dc22"/><rect x="847.3" y="277.5" width="1.2" height="6.3" fill="#d8d8d8"/><rect x="845.4" y="277.8" width="5" height="3.3" fill="#ededed"/><rect x="846.3" y="278.7" width="3.2" height="1.5" fill="#9a9a9a"/><rect x="856.1" y="273.8" width="1.2" height="6.9" fill="#d8d8d8"/><rect x="854.2" y="274.6" width="5" height="6.5" fill="#a4eea4"/><rect x="855.1" y="275.5" width="3.2" height="4.7" fill="#22dc22"/><rect x="864.9" y="275" width="1.2" height="3.8" fill="#d8d8d8"/><rect x="863" y="274.6" width="5" height="2.7" fill="#ededed"/><rect x="863.9" y="275.5" width="3.2" height="0.9" fill="#9a9a9a"/><rect x="873.7" y="266.3" width="1.2" height="14.4" fill="#d8d8d8"/><rect x="871.8" y="266.9" width="5" height="10.4" fill="#a4eea4"/><rect x="872.7" y="267.8" width="3.2" height="8.6" fill="#22dc22"/><rect x="882.4" y="261.5" width="1.2" height="7.9" fill="#d8d8d8"/><rect x="880.5" y="264" width="5" height="3.3" fill="#ededed"/><rect x="881.4" y="264.9" width="3.2" height="1.5" fill="#9a9a9a"/><rect x="891.2" y="265" width="1.2" height="10" fill="#d8d8d8"/><rect x="889.3" y="264.6" width="5" height="5.2" fill="#f0a0a0"/><rect x="890.2" y="265.5" width="3.2" height="3.4" fill="#f01212"/><rect x="900" y="265" width="1.2" height="5" fill="#d8d8d8"/><rect x="898.1" y="267.8" width="5" height="2.6" fill="#ededed"/><rect x="899" y="268.4" width="3.2" height="1.4" fill="#9a9a9a" opacity="0.85"/><rect x="908.8" y="266.9" width="1.2" height="7.5" fill="#d8d8d8"/><rect x="906.9" y="267.8" width="5" height="3.3" fill="#ededed"/><rect x="907.8" y="268.7" width="3.2" height="1.5" fill="#9a9a9a"/><rect x="917.5" y="261.5" width="1.2" height="8.8" fill="#d8d8d8"/><rect x="915.6" y="268.1" width="5" height="2.6" fill="#ededed"/><rect x="916.5" y="268.7" width="3.2" height="1.4" fill="#9a9a9a" opacity="0.85"/><rect x="926.3" y="268.8" width="1.2" height="3.7" fill="#d8d8d8"/><rect x="924.4" y="269.6" width="5" height="2.7" fill="#ededed"/><rect x="925.3" y="270.5" width="3.2" height="0.9" fill="#9a9a9a"/><rect x="935.1" y="266.9" width="1.2" height="8.8" fill="#d8d8d8"/><rect x="933.2" y="267.8" width="5" height="3.9" fill="#a4eea4"/><rect x="934.1" y="268.7" width="3.2" height="2.1" fill="#22dc22"/><rect x="943.8" y="265" width="1.2" height="7.5" fill="#d8d8d8"/><rect x="941.9" y="265.9" width="5" height="3.9" fill="#a4eea4"/><rect x="942.8" y="266.8" width="3.2" height="2.1" fill="#22dc22"/><rect x="952.6" y="256.9" width="1.2" height="13.8" fill="#d8d8d8"/><rect x="950.7" y="258.1" width="5" height="8.6" fill="#a4eea4"/><rect x="951.6" y="259" width="3.2" height="6.8" fill="#22dc22"/><rect x="961.4" y="248.2" width="1.2" height="13.7" fill="#d8d8d8"/><rect x="959.5" y="255.6" width="5" height="3.6" fill="#a4eea4"/><rect x="960.4" y="256.5" width="3.2" height="1.8" fill="#22dc22"/><rect x="970.2" y="249.4" width="1.2" height="8.8" fill="#d8d8d8"/><rect x="968.3" y="253.4" width="5" height="3.3" fill="#ededed"/><rect x="969.2" y="254.3" width="3.2" height="1.5" fill="#9a9a9a"/><rect x="978.9" y="250.7" width="1.2" height="8.7" fill="#d8d8d8"/><rect x="977" y="252.8" width="5" height="3.3" fill="#ededed"/><rect x="977.9" y="253.7" width="3.2" height="1.5" fill="#9a9a9a"/><rect x="987.7" y="249.4" width="1.2" height="5.6" fill="#d8d8d8"/><rect x="985.8" y="249" width="5" height="6.4" fill="#a4eea4"/><rect x="986.7" y="249.9" width="3.2" height="4.6" fill="#22dc22"/><rect x="996.5" y="245.7" width="1.2" height="8.1" fill="#d8d8d8"/><rect x="994.6" y="248.6" width="5" height="2.8" fill="#ededed"/><rect x="995.5" y="249.5" width="3.2" height="1" fill="#9a9a9a"/><rect x="1005.3" y="248.2" width="1.2" height="5.6" fill="#d8d8d8"/><rect x="1003.4" y="248.6" width="5" height="2.8" fill="#ededed"/><rect x="1004.3" y="249.5" width="3.2" height="1" fill="#9a9a9a"/><rect x="1014" y="232.5" width="1.2" height="17.5" fill="#d8d8d8"/><rect x="1012.1" y="234" width="5" height="16.4" fill="#a4eea4"/><rect x="1013" y="234.9" width="3.2" height="14.6" fill="#22dc22"/><rect x="1022.8" y="226.3" width="1.2" height="8.7" fill="#d8d8d8"/><rect x="1020.9" y="227.1" width="5" height="8.3" fill="#a4eea4"/><rect x="1021.8" y="228" width="3.2" height="6.5" fill="#22dc22"/><rect x="1031.6" y="222.5" width="1.2" height="9.4" fill="#d8d8d8"/><rect x="1029.7" y="227.4" width="5" height="3" fill="#ededed"/><rect x="1030.6" y="228.3" width="3.2" height="1.2" fill="#9a9a9a"/><rect x="1040.4" y="220" width="1.2" height="11.3" fill="#d8d8d8"/><rect x="1038.5" y="220.9" width="5" height="9.5" fill="#a4eea4"/><rect x="1039.4" y="221.8" width="3.2" height="7.7" fill="#22dc22"/><rect x="1049.1" y="220" width="1.2" height="34.4" fill="#d8d8d8"/><rect x="1047.2" y="220.3" width="5" height="32" fill="#f0a0a0"/><rect x="1048.1" y="221.2" width="3.2" height="30.2" fill="#f01212"/><rect x="1057.9" y="240.7" width="1.2" height="13.1" fill="#d8d8d8"/><rect x="1056" y="248.6" width="5" height="3.1" fill="#ededed"/><rect x="1056.9" y="249.5" width="3.2" height="1.3" fill="#9a9a9a"/><rect x="1066.7" y="244.4" width="1.2" height="13.1" fill="#d8d8d8"/><rect x="1064.8" y="249" width="5" height="3.9" fill="#f0a0a0"/><rect x="1065.7" y="249.9" width="3.2" height="2.1" fill="#f01212"/><rect x="1075.5" y="241.3" width="1.2" height="13.1" fill="#d8d8d8"/><rect x="1073.6" y="249" width="5" height="2.7" fill="#ededed"/><rect x="1074.5" y="249.9" width="3.2" height="0.9" fill="#9a9a9a"/><rect x="1084.2" y="232" width="1.2" height="19.3" fill="#d8d8d8"/><rect x="1082.3" y="232.8" width="5" height="13.9" fill="#a4eea4"/><rect x="1083.2" y="233.7" width="3.2" height="12.1" fill="#22dc22"/><rect x="1093" y="225" width="1.2" height="12.5" fill="#d8d8d8"/><rect x="1091.1" y="225.9" width="5" height="7" fill="#a4eea4"/><rect x="1092" y="226.8" width="3.2" height="5.2" fill="#22dc22"/><rect x="1101.8" y="226.3" width="1.2" height="10" fill="#d8d8d8"/><rect x="1099.9" y="226.5" width="5" height="5.8" fill="#f0a0a0"/><rect x="1100.8" y="227.4" width="3.2" height="4" fill="#f01212"/><rect x="1110.6" y="227.5" width="1.2" height="12.5" fill="#d8d8d8"/><rect x="1108.7" y="228.4" width="5" height="3.9" fill="#a4eea4"/><rect x="1109.6" y="229.3" width="3.2" height="2.1" fill="#22dc22"/><rect x="1119.3" y="222.5" width="1.2" height="11.3" fill="#d8d8d8"/><rect x="1117.4" y="223.6" width="5" height="6.2" fill="#a4eea4"/><rect x="1118.3" y="224.5" width="3.2" height="4.4" fill="#22dc22"/><rect x="1128.1" y="207.3" width="1.2" height="17.7" fill="#d8d8d8"/><rect x="1126.2" y="212.1" width="5" height="12.1" fill="#a4eea4"/><rect x="1127.1" y="213" width="3.2" height="10.3" fill="#22dc22"/><rect x="1136.9" y="208.1" width="1.2" height="6.3" fill="#d8d8d8"/><rect x="1135" y="209.4" width="5" height="3.3" fill="#f0a0a0"/><rect x="1135.9" y="210.3" width="3.2" height="1.5" fill="#f01212"/><rect x="1145.7" y="205.6" width="1.2" height="6.3" fill="#d8d8d8"/><rect x="1143.8" y="207.1" width="5" height="5.2" fill="#a4eea4"/><rect x="1144.7" y="208" width="3.2" height="3.4" fill="#22dc22"/><rect x="1154.4" y="206.3" width="1.2" height="5.6" fill="#d8d8d8"/><rect x="1152.5" y="205.9" width="5" height="3.3" fill="#f0a0a0"/><rect x="1153.4" y="206.8" width="3.2" height="1.5" fill="#f01212"/><rect x="1163.2" y="208.8" width="1.2" height="10.6" fill="#d8d8d8"/><rect x="1161.3" y="208.4" width="5" height="3.9" fill="#f0a0a0"/><rect x="1162.2" y="209.3" width="3.2" height="2.1" fill="#f01212"/><rect x="1172" y="198" width="1.2" height="14.5" fill="#d8d8d8"/><rect x="1170.1" y="200.9" width="5" height="7.3" fill="#a4eea4"/><rect x="1171" y="201.8" width="3.2" height="5.5" fill="#22dc22"/><rect x="1180.7" y="185" width="1.2" height="17.8" fill="#d8d8d8"/><rect x="1178.8" y="186.6" width="5" height="15.1" fill="#a4eea4"/><rect x="1179.7" y="187.5" width="3.2" height="13.3" fill="#22dc22"/><rect x="1189.5" y="170" width="1.2" height="18.8" fill="#d8d8d8"/><rect x="1187.6" y="177.2" width="5" height="10.2" fill="#a4eea4"/><rect x="1188.5" y="178.1" width="3.2" height="8.4" fill="#22dc22"/><rect x="1198.3" y="160" width="1.2" height="26.3" fill="#d8d8d8"/><rect x="1196.4" y="160.9" width="5" height="17.1" fill="#a4eea4"/><rect x="1197.3" y="161.8" width="3.2" height="15.3" fill="#22dc22"/><rect x="1207.1" y="153.8" width="1.2" height="13.2" fill="#d8d8d8"/><rect x="1205.2" y="155.3" width="5" height="5.1" fill="#ededed"/><rect x="1206.1" y="156.2" width="3.2" height="3.3" fill="#9a9a9a"/><rect x="1215.8" y="136.9" width="1.2" height="19.4" fill="#d8d8d8"/><rect x="1213.9" y="148.4" width="5" height="3.3" fill="#ededed"/><rect x="1214.8" y="149.3" width="3.2" height="1.5" fill="#9a9a9a"/><rect x="1224.6" y="124" width="1.2" height="26" fill="#d8d8d8"/><rect x="1222.7" y="124.9" width="5" height="25.5" fill="#a4eea4"/><rect x="1223.6" y="125.8" width="3.2" height="23.7" fill="#22dc22"/><rect x="1233.4" y="89.4" width="1.2" height="39.1" fill="#d8d8d8"/><rect x="1231.5" y="90.9" width="5" height="35.8" fill="#a4eea4"/><rect x="1232.4" y="91.8" width="3.2" height="34" fill="#22dc22"/><rect x="1242.2" y="62" width="1.2" height="75.5" fill="#d8d8d8"/><rect x="1240.3" y="89.6" width="5" height="7.1" fill="#f0a0a0"/><rect x="1241.2" y="90.5" width="3.2" height="5.3" fill="#f01212"/><rect x="1250.9" y="87" width="1.2" height="111" fill="#d8d8d8"/><rect x="1249" y="94.6" width="5" height="74" fill="#f0a0a0"/><rect x="1249.9" y="95.5" width="3.2" height="72.2" fill="#f01212"/><rect x="1259.7" y="170" width="1.2" height="69.4" fill="#d8d8d8"/><rect x="1257.8" y="182.2" width="5" height="21.3" fill="#f0a0a0"/><rect x="1258.7" y="183.1" width="3.2" height="19.5" fill="#f01212"/><rect x="1268.5" y="153.8" width="1.2" height="47.5" fill="#d8d8d8"/><rect x="1266.6" y="159.6" width="5" height="41.4" fill="#a4eea4"/><rect x="1267.5" y="160.5" width="3.2" height="39.6" fill="#22dc22"/><rect x="1277.3" y="139.4" width="1.2" height="35.6" fill="#d8d8d8"/><rect x="1275.4" y="156.9" width="5" height="3.5" fill="#f0a0a0"/><rect x="1276.3" y="157.8" width="3.2" height="1.7" fill="#f01212"/><rect x="1286" y="149.4" width="1.2" height="36.9" fill="#d8d8d8"/><rect x="1284.1" y="155.9" width="5" height="30.8" fill="#f0a0a0"/><rect x="1285" y="156.8" width="3.2" height="29" fill="#f01212"/><rect x="1294.8" y="155.6" width="1.2" height="48.8" fill="#d8d8d8"/><rect x="1292.9" y="156.5" width="5" height="27.7" fill="#a4eea4"/><rect x="1293.8" y="157.4" width="3.2" height="25.9" fill="#22dc22"/><rect x="1303.6" y="140.6" width="1.2" height="18.2" fill="#d8d8d8"/><rect x="1301.7" y="142.7" width="5" height="13.4" fill="#a4eea4"/><rect x="1302.6" y="143.6" width="3.2" height="11.6" fill="#22dc22"/><rect x="1312.4" y="140.6" width="1.2" height="12.6" fill="#d8d8d8"/><rect x="1310.5" y="143.4" width="5" height="5.8" fill="#f0a0a0"/><rect x="1311.4" y="144.3" width="3.2" height="4" fill="#f01212"/><rect x="1321.1" y="135.6" width="1.2" height="13.2" fill="#d8d8d8"/><rect x="1319.2" y="139" width="5" height="10.2" fill="#a4eea4"/><rect x="1320.1" y="139.9" width="3.2" height="8.4" fill="#22dc22"/><rect x="1329.9" y="138" width="1.2" height="31.4" fill="#d8d8d8"/><rect x="1328" y="139" width="5" height="25.2" fill="#f0a0a0"/><rect x="1328.9" y="139.9" width="3.2" height="23.4" fill="#f01212"/><rect x="1338.7" y="144.4" width="1.2" height="25" fill="#d8d8d8"/><rect x="1336.8" y="145.9" width="5" height="17" fill="#a4eea4"/><rect x="1337.7" y="146.8" width="3.2" height="15.2" fill="#22dc22"/><rect x="1347.5" y="146.3" width="1.2" height="10.6" fill="#d8d8d8"/><rect x="1345.6" y="145.9" width="5" height="7.7" fill="#f0a0a0"/><rect x="1346.5" y="146.8" width="3.2" height="5.9" fill="#f01212"/><rect x="1356.2" y="153.2" width="1.2" height="21.8" fill="#d8d8d8"/><rect x="1354.3" y="152.8" width="5" height="17.6" fill="#f0a0a0"/><rect x="1355.2" y="153.7" width="3.2" height="15.8" fill="#f01212"/><rect x="1365" y="151.9" width="1.2" height="23.1" fill="#d8d8d8"/><rect x="1363.1" y="155.9" width="5" height="13.9" fill="#a4eea4"/><rect x="1364" y="156.8" width="3.2" height="12.1" fill="#22dc22"/><rect x="1373.8" y="150" width="1.2" height="8.2" fill="#d8d8d8"/><rect x="1371.9" y="151.6" width="5" height="4.5" fill="#ededed"/><rect x="1372.8" y="152.5" width="3.2" height="2.7" fill="#9a9a9a"/><rect x="1382.5" y="134.4" width="1.2" height="21.3" fill="#d8d8d8"/><rect x="1380.6" y="135.3" width="5" height="17.1" fill="#a4eea4"/><rect x="1381.5" y="136.2" width="3.2" height="15.3" fill="#22dc22"/><rect x="1391.3" y="116.3" width="1.2" height="21.3" fill="#d8d8d8"/><rect x="1389.4" y="117.1" width="5" height="19.6" fill="#a4eea4"/><rect x="1390.3" y="118" width="3.2" height="17.8" fill="#22dc22"/><rect x="1400.1" y="116.3" width="1.2" height="21.3" fill="#d8d8d8"/><rect x="1398.2" y="117.8" width="5" height="13.9" fill="#f0a0a0"/><rect x="1399.1" y="118.7" width="3.2" height="12.1" fill="#f01212"/><rect x="1408.9" y="121.9" width="1.2" height="13.1" fill="#d8d8d8"/><rect x="1407" y="127.8" width="5" height="3.9" fill="#a4eea4"/><rect x="1407.9" y="128.7" width="3.2" height="2.1" fill="#22dc22"/><rect x="1417.6" y="122.5" width="1.2" height="11.3" fill="#d8d8d8"/><rect x="1415.7" y="124" width="5" height="5.2" fill="#a4eea4"/><rect x="1416.6" y="124.9" width="3.2" height="3.4" fill="#22dc22"/><rect x="1426.4" y="108.8" width="1.2" height="18.8" fill="#d8d8d8"/><rect x="1424.5" y="109.6" width="5" height="15.2" fill="#a4eea4"/><rect x="1425.4" y="110.5" width="3.2" height="13.4" fill="#22dc22"/><rect x="1435.2" y="90.6" width="1.2" height="24.4" fill="#d8d8d8"/><rect x="1433.3" y="103.4" width="5" height="2.7" fill="#ededed"/><rect x="1434.2" y="104.3" width="3.2" height="0.9" fill="#9a9a9a"/><rect x="1444" y="97.5" width="1.2" height="54.5" fill="#d8d8d8"/><rect x="1442.1" y="104" width="5" height="35.8" fill="#f0a0a0"/><rect x="1443" y="104.9" width="3.2" height="34" fill="#f01212"/><rect x="1452.7" y="122.5" width="1.2" height="18.2" fill="#d8d8d8"/><rect x="1450.8" y="130.9" width="5" height="7.1" fill="#a4eea4"/><rect x="1451.7" y="131.8" width="3.2" height="5.3" fill="#22dc22"/><rect x="1461.5" y="123.8" width="1.2" height="20.6" fill="#d8d8d8"/><rect x="1459.6" y="130.3" width="5" height="9.5" fill="#f0a0a0"/><rect x="1460.5" y="131.2" width="3.2" height="7.7" fill="#f01212"/><rect x="1470.3" y="125.7" width="1.2" height="17.5" fill="#d8d8d8"/><rect x="1468.4" y="126.5" width="5" height="13.9" fill="#a4eea4"/><rect x="1469.3" y="127.4" width="3.2" height="12.1" fill="#22dc22"/><rect x="1479.1" y="123.8" width="1.2" height="25.6" fill="#d8d8d8"/><rect x="1477.2" y="125.3" width="5" height="7.7" fill="#f0a0a0"/><rect x="1478.1" y="126.2" width="3.2" height="5.9" fill="#f01212"/><rect x="1487.8" y="117.5" width="1.2" height="18.2" fill="#d8d8d8"/><rect x="1485.9" y="124" width="5" height="7.1" fill="#a4eea4"/><rect x="1486.8" y="124.9" width="3.2" height="5.3" fill="#22dc22"/><rect x="1496.6" y="120" width="1.2" height="8.2" fill="#d8d8d8"/><rect x="1494.7" y="123.4" width="5" height="3.3" fill="#ededed"/><rect x="1495.6" y="124.3" width="3.2" height="1.5" fill="#9a9a9a"/><rect x="1505.4" y="125" width="1.2" height="18.2" fill="#d8d8d8"/><rect x="1503.5" y="125.3" width="5" height="15.1" fill="#f0a0a0"/><rect x="1504.4" y="126.2" width="3.2" height="13.3" fill="#f01212"/><rect x="1514.2" y="135" width="1.2" height="15.7" fill="#d8d8d8"/><rect x="1512.3" y="139.6" width="5" height="10.2" fill="#f0a0a0"/><rect x="1513.2" y="140.5" width="3.2" height="8.4" fill="#f01212"/><rect x="1522.9" y="147" width="1.2" height="10.6" fill="#d8d8d8"/><rect x="1521" y="149" width="5" height="3.4" fill="#ededed"/><rect x="1521.9" y="149.9" width="3.2" height="1.6" fill="#9a9a9a"/><rect x="1531.7" y="146.3" width="1.2" height="9.4" fill="#d8d8d8"/><rect x="1529.8" y="149" width="5" height="3.4" fill="#ededed"/><rect x="1530.7" y="149.9" width="3.2" height="1.6" fill="#9a9a9a"/><rect x="1540.5" y="150" width="1.2" height="30.5" fill="#d8d8d8"/><rect x="1538.6" y="150.9" width="5" height="28.9" fill="#f0a0a0"/><rect x="1539.5" y="151.8" width="3.2" height="27.1" fill="#f01212"/><rect x="1549.3" y="173.2" width="1.2" height="51.3" fill="#d8d8d8"/><rect x="1547.4" y="177.8" width="5" height="26.4" fill="#f0a0a0"/><rect x="1548.3" y="178.7" width="3.2" height="24.6" fill="#f01212"/><rect x="1558" y="192" width="1.2" height="35.6" fill="#d8d8d8"/><rect x="1556.1" y="202.2" width="5" height="25.2" fill="#f0a0a0"/><rect x="1557" y="203.1" width="3.2" height="23.4" fill="#f01212"/><rect x="1566.8" y="221.3" width="1.2" height="63.7" fill="#d8d8d8"/><rect x="1564.9" y="232.7" width="5" height="7.7" fill="#f0a0a0"/><rect x="1565.8" y="233.6" width="3.2" height="5.9" fill="#f01212"/><rect x="1575.6" y="229" width="1.2" height="26.7" fill="#d8d8d8"/><rect x="1573.7" y="229.6" width="5" height="8.9" fill="#a4eea4"/><rect x="1574.6" y="230.5" width="3.2" height="7.1" fill="#22dc22"/><rect x="1584.3" y="211" width="1.2" height="22.8" fill="#d8d8d8"/><rect x="1582.4" y="211.6" width="5" height="18.8" fill="#a4eea4"/><rect x="1583.3" y="212.5" width="3.2" height="17" fill="#22dc22"/></g>
<g id="ind">
<polyline fill="none" stroke="#e2e2e2" stroke-width="1.25" stroke-linejoin="round"  points="0,390.3 12.7,390.3 22.4,391.6 31.7,392.8 40.6,392.4 49.5,389.9 58.4,386.9 67.7,386.1 76.6,386.5 85.4,387.8 101.5,387.8 111.3,386.1 137.9,386.1 150,385 162.8,383.8 224.6,383.8 231.4,386.2 239.8,387.8 252.5,387.8 258.4,386.8 277.5,387.2 295,386.3 303.8,381.3 312.6,378.2 321.3,373.8 330,368.2 338.9,365 347.6,361.3 356.4,355.7 365.1,350 382.6,343.2 407.7,335.6 426.5,333.8 451.5,328.8 470.3,329.4 482.8,328.1 494,325 505,319.4 523.2,313.8 532.6,306.9 541.3,301.9 550,295.7 560,293.2 567.5,290 575.6,283.2 584.4,275.7 593.2,268.2 602.6,258.2 611,252.5 620.3,245 629.5,244.8 647.6,246 663.9,247.5 680.2,248.5 690.4,251 708.3,252.5 716.5,251 734,251 751.5,251 769,251 777.8,256.9 785,259.4 794.4,268.8 812.6,270.7 830,272.5 839.5,270 856.4,268.2 865.1,266.9 873.9,263.8 882.6,261.5 926.4,261.5 944,258.8 961.5,253.8 979,250 996.3,246.3 1005.7,245.3 1014.7,238.2 1023.8,232.5 1031.9,228.8 1041.3,224.4 1075.7,224.4 1084.9,221.5 1102.7,219.4 1119.5,217.5 1128.3,211.9 1137.1,208.1 1145.8,205.6 1154.6,202.5 1163.3,200 1172.5,195.7 1181.9,187.6 1190.7,178.8 1198.5,168.2 1207.3,158.8 1216.3,148.8 1225.7,132.5 1234.5,113.8 1242.6,100.7 1252,100 1260.1,100.3 1268.9,98.8 1277.6,99 1286.4,100.7 1295.2,100.3 1303.9,97.8 1312.7,97.5 1321.5,96 1330.2,97.5 1339,98.8 1347.7,100.7 1356.5,102 1365.3,102 1374,101.5 1382.5,100 1392.5,96.3 1400,97.5 1409,105.7 1417.8,111.9 1427.2,107.5 1435.3,105 1444.8,103.8 1453.6,102.5 1462.4,106.9 1470.1,105.7 1479.3,104.8 1488,103.8 1497,103.1 1506.2,103.8 1514.9,103.8 1523.7,104.4 1532.5,106.3 1540.8,102.5 1549.6,92.5 1557.7,85 1566.5,78.3 1572,74.6 1576.5,73.3 1581,73.8 1585.3,75"/>
<polyline fill="none" stroke="#e2e2e2" stroke-width="1.25" stroke-linejoin="round"  points="0,397.5 40,397.5 60,397 85,397 100,397.2 120,397.2 140,396.3 172,395.3 198,394.9 216,394.8 225,395.2 234,396 251,396.6 260,396.3 278,395.5 286,394.6 295,393.2 304,392.3 312.6,391.4 330,389.3 345,387.3 370,381.5 395,375 432.7,365 457.7,357.5 494,348.2 507.5,343.8 532.6,338.2 550,332 575.8,325 595,315 606.3,308.8 620.3,302.6 637.6,297.6 655.1,292.6 672.6,289.4 690.4,287 699.6,286.3 716.5,287 725.2,288.2 742.7,288.6 760.3,288.6 770,288.8 785,290.7 794.4,293.2 830,293.5 840,291.9 856.4,289.4 865.1,289.4 882.6,284.4 900.2,281.3 917.7,278.8 935.2,278.5 952.7,275 970.3,271.3 982.8,269.4 992.5,268.2 1014.7,261.9 1031.9,258.2 1041.3,254.4 1050.1,254 1067,252.8 1075.7,252.8 1084.9,250 1102.7,246.3 1119.5,243.2 1128.3,240.7 1145.8,235 1163.3,230.7 1172.5,226.9 1190.7,222.5 1210,213.8 1225.7,203.8 1236.3,195 1242.6,189.4 1252,186.3 1260.1,185.7 1268.9,181.3 1277.6,176.3 1286.4,174.4 1295.2,171.3 1303.9,167.6 1312.7,163.8 1321.5,161.9 1330.2,158.8 1339,155 1347.7,153.8 1356.5,152.3 1365.3,151.3 1374,150.7 1383.5,148.8 1400,150.7 1417.8,153.2 1427.2,149.4 1435.3,146.3 1444.8,143.8 1453.6,142 1462.4,140 1470.1,138.8 1479.3,137 1488,135.7 1497,135 1506.2,135 1514.9,134.4 1523.7,134.4 1532.5,133.2 1540.8,135 1549.6,140 1558.4,145 1567.1,150 1575.9,154.4 1584.6,157.5"/>
<polyline fill="none" stroke="#e2e2e2" stroke-width="1.25" stroke-linejoin="round"  points="0,405.1 31.7,405.4 40.6,404.5 49.5,405.5 58.4,406.8 76.1,406.8 85.4,406 101.5,406 111.3,407.6 150,407.2 162.8,406 224.6,406 258.4,406 276,405.6 283.8,404.3 296.6,401.8 310,404.5 326.8,408.1 345,411.5 364.5,414.4 377,414.4 402.2,409.3 427.4,400.5 451.5,389.5 470,378.8 480,375.4 496.8,371.2 513.5,367 523.6,365.9 538.7,366.2 549.5,367.9 560.4,364.5 573.8,363.7 587.3,362 602.3,361.2 610.7,358.7 620.8,358.3 630.8,353.6 640.9,346.1 652.6,337.7 662.7,332.7 672.7,331 684.5,327.7 694.5,323.5 706.3,320.9 719.7,322.6 734.7,323.1 751.5,323.8 764.9,323.8 775,322.5 785.1,321.2 794.3,317 811.9,316.2 830.3,316.2 845.4,314.5 857.1,311.2 870.6,310 884,309.5 895.7,303.6 907.4,299.4 915.8,296.1 925.9,295.2 935.9,294.4 946,295.6 957.7,296.1 969.4,294.9 981.2,291.9 992.9,288.5 1004.6,284.4 1014.7,285.5 1028.1,285.7 1039.8,286.5 1051.6,285.2 1066.8,281.2 1083.5,277.8 1093.6,276.1 1108.7,269.4 1118.7,266.6 1133.8,265.6 1147.2,264.4 1157.3,261.9 1172.3,259.9 1182.4,260.2 1190.8,263.6 1199.2,267.8 1207.5,270.3 1215.9,273.6 1224.3,275.3 1234.3,280.3 1242.7,279 1251.1,272 1259.5,268.6 1267.9,263.2 1276.2,256 1284.6,251 1294.7,243.5 1304.7,237.6 1314.8,230.9 1321.5,226.3 1330.2,219.4 1339,210.7 1347.7,205.6 1356.5,203.1 1365.3,201.3 1374,200.6 1383.5,200 1400,199.8 1417.8,192.3 1427.2,192.3 1435.3,184.4 1444.8,181.9 1453.6,180.7 1462.4,173.1 1470.1,170.6 1479.3,170.6 1488,169.4 1497,169.4 1506.2,165.6 1514.9,165.6 1523.7,165.6 1532.5,161.3 1540.8,167.5 1549.6,180 1558.4,196.3 1567.1,218.8 1575.9,231.3 1584.6,239.4"/>
<polyline fill="none" stroke="#bb0a0a" stroke-width="1.4" stroke-linejoin="round"  points="0,397.5 31.7,397.9 40.6,397.5 49.5,395.4 58.4,392.8 67.7,392.4 76.6,392.8 85.4,394.5 101.5,395.8 111.3,397.9 119.7,398.8 128.6,397.1 137.9,395.4 145,395.2 152.7,395.5 162.8,393.8 172.1,392.5 181.5,393.3 189.9,394.6 207.7,394.6 224.6,395.9 233,396.7 251.7,396.7 260.1,395.9 269.4,394.6 286,392.6 304,389.5 330,381.3 356.4,369.4 374,363.8 400,356.9 426.5,353.2 445,348.2 461.5,344.4 470,343.2 488.8,337 505,331.3 523.2,325.7 541.3,318.2 550.1,313.8 567.6,308.8 575.8,302.5 593.9,291.8 602.6,284.2 611,280 620.3,274 629.5,275.7 645.7,277.6 655.1,279.4 663.9,284.2 672.6,288.8 681.2,292.8 690.4,293.4 699.6,294.4 708.3,296.3 716.5,299.1 725.2,299.5 734,299.8 742.7,298.8 751.5,296.3 760.3,292.6 769,288.8 777.8,285.4 786.3,286.3 795,287.3 812.6,288.2 830,288.2 839.5,285.7 856.4,283.8 865.1,281.3 873.9,278.2 882.6,276.3 891.4,274.8 908.9,272.5 926.4,272.5 935.2,270.7 944,269 952.7,266.9 961.5,264.4 979,260.7 996.3,257.6 1005.7,256.3 1014.7,251.9 1023.8,246.9 1031.9,243.2 1041.3,238.8 1050.3,240.7 1057.8,242.3 1067,244.4 1075.7,245.7 1084.9,243.2 1093.6,239.4 1102.7,238.2 1111.2,236.9 1119.5,235 1128.3,228.8 1137.1,225.7 1145.8,222.8 1154.6,220 1163.3,217.5 1172.7,214.4 1181.5,208.8 1190.3,202.5 1198.5,194 1207.3,186.3 1216.3,178.8 1225.7,168.2 1234.5,151.9 1242.6,140.6 1252,148.8 1260.1,156.9 1268.9,158.8 1277.6,157.8 1286.4,163.2 1295.2,162.5 1303.9,158.2 1312.7,155.7 1321.5,152.5 1330.2,155.7 1339,154.4 1347.7,154.4 1356.5,156.3 1365.3,156.9 1374.4,156.3 1383.5,150.7 1392.5,145 1400,142 1409,138.2 1417.8,133.8 1427.2,128.2 1435.3,125 1444.8,128.2 1453.6,130 1462.4,131 1470.1,131.6 1479.3,131.3 1488,129.4 1497,128.6 1506.2,132 1514.9,135.7 1523.7,138.2 1532.5,141.3 1540.8,150 1549.6,159.4 1558.4,173.8 1567.1,187.5 1575.9,195 1584.6,198.8"/>
</g>
<g id="draw" stroke-linecap="butt">
<line x1="0" y1="346.85" x2="1710.6" y2="259.8" stroke="#f6f6f6" stroke-width="2.55"/>
<line x1="0" y1="359.95" x2="1710.6" y2="272.6" stroke="#f6f6f6" stroke-width="2.55"/>
<line x1="0" y1="370.85" x2="1710.6" y2="282.7" stroke="#f6f6f6" stroke-width="2.55"/>
<line x1="110.6" y1="407.6" x2="1710.6" y2="327.6" stroke="#f6f6f6" stroke-width="2.55"/>
<line x1="1242.6" y1="62.5" x2="1710.6" y2="130.3" stroke="#f6f6f6" stroke-width="2.55"/>
<line x1="1154.7" y1="225" x2="1710.6" y2="306.8" stroke="#f6f6f6" stroke-width="2.55"/>
<line x1="803.3" y1="301.3" x2="1710.6" y2="155.6" stroke="#f0980f" stroke-width="2.6"/>
<line x1="0" y1="416" x2="197.6" y2="434" stroke="#f0980f" stroke-width="2.6"/>
</g>
<polygon points="1594,45 1601.5,52.5 1601.5,60.5 1586.5,60.5 1586.5,52.5" fill="#bdbdbd"/>
<g id="icons">
<g fill="#9b9ea1"><rect x="331" y="5.7" width="3.4" height="1.8"/><rect x="334.2" y="4" width="1.9" height="5"/><rect x="338.7" y="5.7" width="10.3" height="1.8"/><rect x="331" y="12" width="10.1" height="1.8"/><rect x="343.9" y="10.4" width="1.9" height="5.2"/><rect x="345.8" y="12" width="3.2" height="1.8"/><rect x="331" y="18.3" width="7.4" height="1.8"/><rect x="338.2" y="16.8" width="1.9" height="5.2"/><rect x="342.3" y="18.3" width="6.7" height="1.8"/></g>
<g fill="none" stroke="#9b9ea1" stroke-width="1.3"><line x1="501.6" y1="10.2" x2="501.6" y2="16"/><line x1="501.6" y1="19" x2="501.6" y2="20.9"/><rect x="499.6" y="16.2" width="3.9" height="2.6"/><line x1="507.9" y1="5" x2="507.9" y2="10.5" stroke-width="1.6"/><line x1="507.9" y1="17.5" x2="507.9" y2="22" stroke-width="1.6"/><rect x="506" y="10.9" width="3.8" height="6.6" stroke-width="1.5"/><line x1="514.4" y1="4" x2="514.4" y2="8.4"/><rect x="512.5" y="8.6" width="3.9" height="7.7"/></g>
<path fill="none" stroke="#9b9ea1" stroke-width="1.2" stroke-linejoin="round" d="M592.2,6.5 H605.8 Q607.4,6.5 607.4,8.1 V15.6 Q607.4,17.2 605.8,17.2 H598.4 L594.4,21.2 L593.8,17.2 H592.2 Q590.6,17.2 590.6,15.6 V8.1 Q590.6,6.5 592.2,6.5 Z"/>
<path fill="#9b9ea1" d="M593.6,17.2 L597.6,17.2 L594.4,21.4 Z"/>
<path fill="#9b9ea1" d="M687.8,13 C690.5,8.8 693.8,6.8 697,6.8 C700.4,6.8 703.6,8.9 706.1,13 C703.6,17.2 700.4,19.3 697,19.3 C693.8,19.3 690.5,17.3 687.8,13 Z"/>
<circle cx="697.6" cy="12.7" r="4.3" fill="#2f3337"/>
<circle cx="695.2" cy="11.2" r="1.7" fill="#9b9ea1"/>
<g fill="none" stroke="#9b9ea1" stroke-width="1.4"><circle cx="1667.7" cy="12.9" r="5.2"/>
<line x1="1672.90" y1="12.90" x2="1676.40" y2="12.90" stroke-width="1.7"/>
<line x1="1670.30" y1="17.40" x2="1672.05" y2="20.43" stroke-width="1.7"/>
<line x1="1665.10" y1="17.40" x2="1663.35" y2="20.43" stroke-width="1.7"/>
<line x1="1662.50" y1="12.90" x2="1659.00" y2="12.90" stroke-width="1.7"/>
<line x1="1665.10" y1="8.40" x2="1663.35" y2="5.37" stroke-width="1.7"/>
<line x1="1670.30" y1="8.40" x2="1672.05" y2="5.37" stroke-width="1.7"/>
<circle cx="1667.7" cy="12.9" r="2.6" stroke="#4a4e52" stroke-width="1"/></g>
</g>
<g id="hand">
<path fill="none" stroke="#2fd41a" stroke-linecap="round" stroke-linejoin="round" stroke-width="3.1" d="M1577.2,494.2 C1590,494.5 1600,495 1607.1,497 C1615,499.5 1620,503 1623.8,507.3 C1628,512 1631,517 1632.1,521.6 C1634,527 1635,531 1634.5,535.9 C1634.2,541 1633,546 1630.9,550.2 C1629,555 1626,560 1623.8,564.6 C1621.5,570 1620,574 1617.8,578.9 C1616.5,582 1615,584.5 1613,586 C1611,587.3 1609,587.8 1607.1,587.9 C1600,588.3 1591,588.4 1583.2,588.4 C1575,588.4 1566,588.6 1559.3,588 C1555,587.3 1551,585.5 1547.4,582.5 C1543.5,579 1540.5,575 1537.9,570.5 C1535,566 1533,562 1531.9,557.4 C1530.8,554 1530.5,551 1530.7,547.9 C1531,543 1532.5,538 1534.3,533.5 C1536.5,528 1539,523 1542.6,518 C1546,513.5 1550,509.5 1554.6,506.1 C1559,503 1563.5,501.3 1568.9,500.6 C1574,500.2 1578,500.3 1583.2,500.6 L1591.6,501.6"/>
<path fill="none" stroke="#2fd41a" stroke-linecap="round" stroke-linejoin="round" stroke-width="3.3" d="M1618.2,105.7 C1624,107.3 1629,108.8 1633.8,109.9 C1640,111.2 1646,111.8 1650.8,112.4 L1655,113.7"/>
<path fill="none" stroke="#2fd41a" stroke-linecap="round" stroke-linejoin="round" stroke-width="3.3" d="M1656.7,110.3 C1654,108 1651,107.2 1647.4,106.9 C1644.5,106.6 1642,106.6 1639.8,106.9 C1637,107.5 1634.5,108.7 1633,110.3 C1631,112.3 1630,114.5 1629.6,117.1 C1629.3,119.5 1629.4,121.8 1630,123.8 C1631,126.2 1633,127.8 1635.5,128.5 C1638.2,129.3 1641,129.5 1644,129.3 C1647,129 1650,128.3 1652.5,127.2 C1654.8,126 1656.6,124.3 1657.5,122.1 C1658.3,120 1658.3,118 1657.5,116.2 C1656.8,114.6 1655.6,113.3 1654.1,112.4"/>
<path fill="none" stroke="#2fd41a" stroke-linecap="round" stroke-linejoin="round" stroke-width="3.4" d="M1652.5,290.2 C1659,289.9 1666,289.9 1671.9,290.2 C1672.6,291.5 1672.3,292.8 1671.5,293.8 C1673,293.8 1674.6,293.8 1676.1,294 C1678,294.2 1679.8,294.6 1681.2,295.3 C1682.5,296.2 1683.2,297.4 1683.3,298.7 C1683.4,300 1683.1,301.1 1682.5,302.1 C1681.6,303.7 1680.3,305.1 1678.7,306.3 C1677.2,307.4 1675.5,308.2 1673.6,308.8 C1671.7,309.4 1669.7,309.7 1667.7,309.7 C1665.4,309.6 1663.1,309.1 1660.9,308.4 C1658.5,307.8 1656.2,307 1654.1,305.9 C1652.1,304.9 1650.4,303.6 1649.1,302.1 C1648,300.8 1647.3,299.4 1647,297.8 C1646.7,296.5 1646.7,295.2 1647,294 C1647.3,292.8 1648,291.8 1649.1,291.1 C1650.1,290.5 1651.3,290.2 1652.5,290.2 Z"/>
</g>
</svg>
<div class="al" style="left:1717.6px;top:54.9px">5.600,000</div>
<div class="al" style="left:1717.6px;top:115.0px">5.200,000</div>
<div class="al" style="left:1717.6px;top:173.7px">4.800,000</div>
<div class="al" style="left:1717.6px;top:291.1px">4.000,000</div>
<div class="al" style="left:1717.6px;top:349.9px">3.600,000</div>
<div class="al" style="left:1717.6px;top:410.0px">3.200,000</div>
<div class="al" style="left:1727px;top:479.3px">70,00 %</div>
<div class="al" style="left:1727px;top:507.3px">50,00 %</div>
<div class="al" style="left:1727px;top:536.6px">30,00 %</div>
<svg id="tags2" width="1790" height="591" viewBox="0 0 1790 591">
<polygon points="1707.3,73.4 1719.6,60.5 1786,60.5 1786,86.3 1719.6,86.3" fill="#fff"/>
<polygon points="1707.3,156.0 1719.6,143.1 1786,143.1 1786,168.9 1719.6,168.9" fill="#fff"/>
<polygon points="1707.3,197.3 1719.6,184.4 1786,184.4 1786,210.2 1719.6,210.2" fill="#f00000"/>
<polygon points="1707.3,238.3 1719.6,225.4 1786,225.4 1786,251.2 1719.6,251.2" fill="#fff"/>
<polygon points="1707.3,532.9 1719.6,520.0 1775.6,520.0 1775.6,545.8 1719.6,545.8" fill="#fff"/>
</svg>
<div class="tag" style="left:1722px;top:60px">5.524,878</div>
<div class="tag" style="left:1722px;top:143.3px">4.965,935</div>
<div class="tag" style="left:1722px;top:183.4px;color:#ffd0d0;text-shadow:0.8px 0 0.4px rgba(255,208,208,0.6)">4.685,561</div>
<div style="position:absolute;left:1710.5px;top:198.2px;width:79.5px;height:25.4px;border-radius:3.5px;background:#0ca516;"></div>
<div class="tag" style="left:1711.6px;top:196px;letter-spacing:0.35px;color:#f2fff2;font-weight:bold;font-size:13.5px;text-shadow:0.4px 0 0.3px rgba(255,255,255,0.5);">4.589,430</div>
<div class="tag" style="left:1722px;top:224.7px">4.406,991</div>
<div class="tag" style="left:1722px;top:519.9px">34,86 %</div>
</body></html>
